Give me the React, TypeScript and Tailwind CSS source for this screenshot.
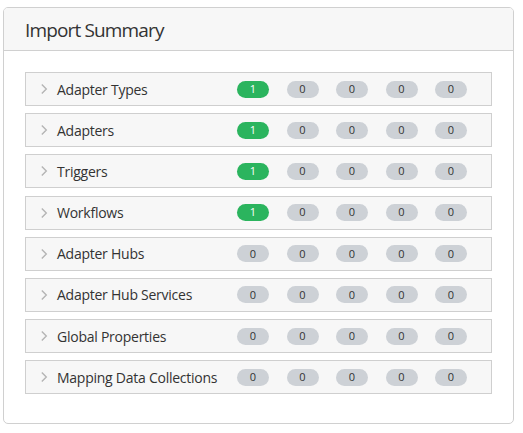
const rows: { name: string; counts: number[] }[] = [
  { name: "Adapter Types", counts: [1, 0, 0, 0, 0] },
  { name: "Adapters", counts: [1, 0, 0, 0, 0] },
  { name: "Triggers", counts: [1, 0, 0, 0, 0] },
  { name: "Workflows", counts: [1, 0, 0, 0, 0] },
  { name: "Adapter Hubs", counts: [0, 0, 0, 0, 0] },
  { name: "Adapter Hub Services", counts: [0, 0, 0, 0, 0] },
  { name: "Global Properties", counts: [0, 0, 0, 0, 0] },
  { name: "Mapping Data Collections", counts: [0, 0, 0, 0, 0] },
];

const Chevron = () => (
  <svg width="8" height="12" viewBox="0 0 8 12" className="shrink-0">
    <path d="M1.8 1.5 L6.3 6 L1.8 10.5" fill="none" stroke="#b5b5b5" strokeWidth="1.4" />
  </svg>
);

const Badge = ({ value }: { value: number }) => (
  <span
    className={
      value > 0
        ? "w-[32px] h-[17px] rounded-full bg-[#2bb45e] text-white text-[11px] font-medium flex items-center justify-center"
        : "w-[32px] h-[17px] rounded-full bg-[#cdd1d6] text-[#333] text-[11px] font-medium flex items-center justify-center"
    }
  >
    {value}
  </span>
);

export default function App() {
  return (
    <div className="w-[523px] h-[433px] bg-white pt-[7px] pl-[3px] font-['Segoe_UI','Open_Sans',sans-serif]">
      <div className="w-[511px] h-[417px] border border-[#d0d0d0] rounded-[5px] overflow-hidden">
        <div className="h-[43px] bg-[#f7f7f7] border-b border-[#d0d0d0] flex items-center pl-[21px]">
          <h2 className="text-[19px] text-[#333] font-medium tracking-[-0.85px] pt-[3px]">Import Summary</h2>
        </div>
        <div className="pt-[21px] px-[21px] flex flex-col gap-[7.2px]">
          {rows.map((r) => (
            <div
              key={r.name}
              className="h-[34px] bg-[#f7f7f7] border border-[#cfcfcf] flex items-center"
            >
              <div className="w-[211px] flex items-center pl-[14px] gap-[9px]">
                <Chevron />
                <span className="text-[14px] text-[#333] tracking-[-0.25px] whitespace-nowrap">{r.name}</span>
              </div>
              <div className="flex items-center gap-[17.5px]">
                {r.counts.map((c, i) => (
                  <Badge key={i} value={c} />
                ))}
              </div>
            </div>
          ))}
        </div>
      </div>
    </div>
  );
}
